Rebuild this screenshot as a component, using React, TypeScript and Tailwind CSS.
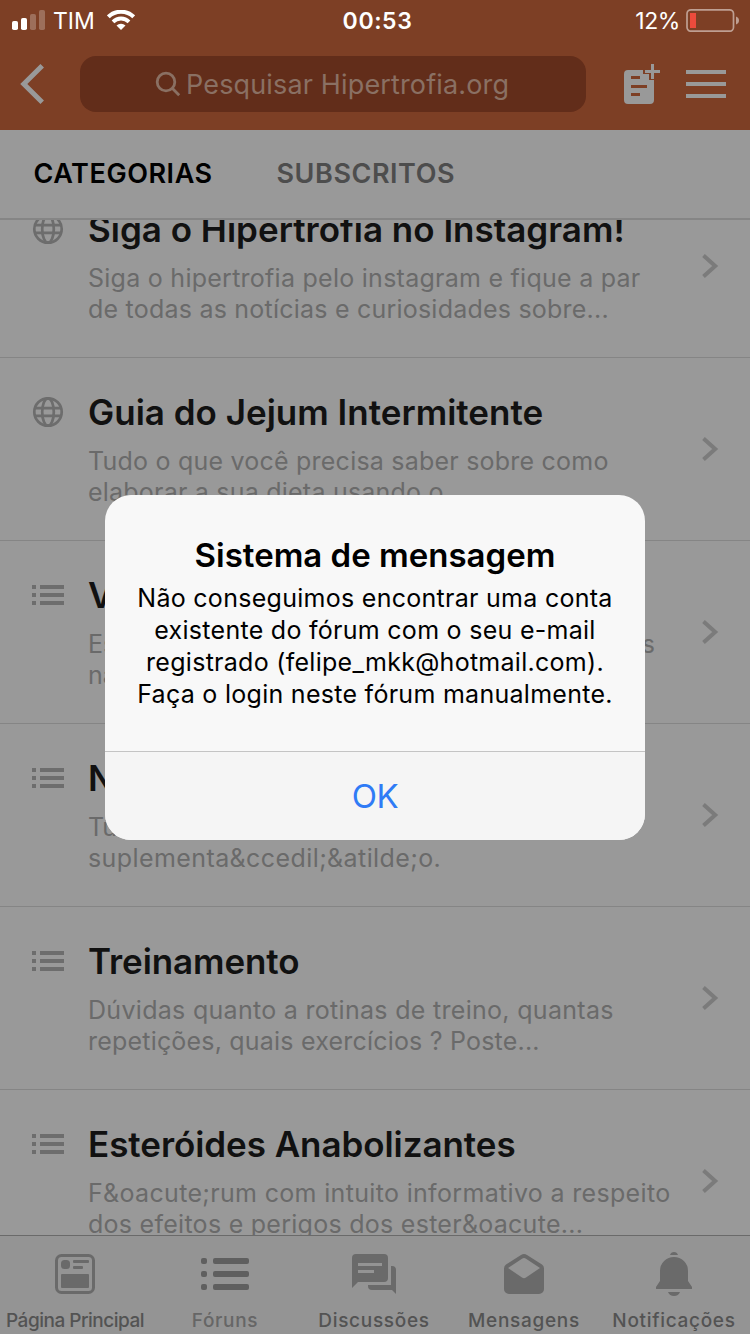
import React from 'react';

interface Forum {
  icon: 'globe' | 'list';
  title: string;
  titleClass: string;
  lines: { text: string; tail?: string; className: string }[];
}

const forums: Forum[] = [
  {
    icon: 'globe',
    title: 'Siga o Hipertrofia no Instagram!',
    titleClass: '',
    lines: [
      { text: 'Siga o hipertrofia pelo instagram e fique a par', className: 'tracking-[0.26px]' },
      { text: 'de todas as notícias e curiosidades sobre...', className: 'tracking-[0.22px]' },
    ],
  },
  {
    icon: 'globe',
    title: 'Guia do Jejum Intermitente',
    titleClass: '',
    lines: [
      { text: 'Tudo o que você precisa saber sobre como', className: 'tracking-[0.22px]' },
      { text: 'elaborar a sua dieta usando o...', className: 'tracking-[0.22px]' },
    ],
  },
  {
    icon: 'list',
    title: 'V',
    titleClass: '',
    lines: [
      { text: 'Es', tail: 's', className: '' },
      { text: 'na', className: '' },
    ],
  },
  {
    icon: 'list',
    title: 'N',
    titleClass: '',
    lines: [
      { text: 'Tu', className: '' },
      { text: 'suplementa&ccedil;&atilde;o.', className: 'tracking-[0.41px]' },
    ],
  },
  {
    icon: 'list',
    title: 'Treinamento',
    titleClass: 'tracking-[-0.1px]',
    lines: [
      { text: 'Dúvidas quanto a rotinas de treino, quantas', className: 'tracking-[0.3px]' },
      { text: 'repetições, quais exercícios ? Poste...', className: 'tracking-[0.2px]' },
    ],
  },
  {
    icon: 'list',
    title: 'Esteróides Anabolizantes',
    titleClass: 'tracking-[-0.06px]',
    lines: [
      { text: 'F&oacute;rum com intuito informativo a respeito', className: 'tracking-[0.33px]' },
      { text: 'dos efeitos e perigos dos ester&oacute...', className: 'tracking-[0.27px]' },
    ],
  },
];

const GlobeIcon = () => (
  <svg width="32" height="32" viewBox="0 0 32 32" fill="none" stroke="#6d6d6d" strokeWidth="2.7">
    <circle cx="16" cy="16" r="13.7" />
    <ellipse cx="16" cy="16" rx="5.800" ry="13.7" />
    <path d="M2.5 12.2h27M2.5 19.8h27" />
  </svg>
);

const ListIcon = () => (
  <svg width="32" height="20" viewBox="0 0 32 20" fill="#6d6d6d">
    <path d="M0 0h4v4H0zM8 0h24v4H8zM0 8h4v4H0zM8 8h24v4H8zM0 16h4v4H0zM8 16h24v4H8z" />
  </svg>
);

const StatusBar = () => (
  <div className="flex h-10 items-center text-[23px] text-white">
    <div className="flex w-[250px] items-center pl-3">
      <svg width="34" height="20" viewBox="0 0 34 20" fill="#fff">
        <rect x="0" y="11" width="6" height="9" rx="1.8" />
        <rect x="9" y="8" width="6" height="12" rx="1.8" />
        <rect x="18" y="4" width="6" height="16" rx="1.8" opacity="0.25" />
        <rect x="27" y="0" width="6" height="20" rx="1.8" opacity="0.25" />
      </svg>
      <span className="ml-[7px] w-[42px] pt-0.5">TIM</span>
      <svg className="ml-3" width="28" height="20" viewBox="0 0 28 20" fill="none" stroke="#fff">
        <path d="M1.3 6.9a18 18 0 0 1 25.4 0" strokeWidth="4" />
        <path d="M6 11.8a11.4 11.4 0 0 1 16 0" strokeWidth="3.8" />
        <path d="M14 20l-4.5-4.4a6.4 6.4 0 0 1 9 0z" fill="#fff" stroke="none" />
      </svg>
    </div>
    <div className="w-[255px] pt-0.5 text-center font-semibold tracking-[0.6px]">00:53</div>
    <div className="flex flex-1 items-center justify-end pr-2.5">
      <span className="mr-1.5 pt-0.5 tracking-[-0.4px]">12%</span>
      <svg width="54" height="24" viewBox="0 0 54 24" fill="none">
        <rect x="1" y="1.800" width="46.5" height="21.4" rx="4" stroke="#be9f92" strokeWidth="1.7" />
        <rect x="4" y="5" width="6" height="15" fill="#ec4b3c" />
        <path d="M50 8.6q3 1.2 3 4t-3 4z" fill="#be9f92" />
      </svg>
    </div>
  </div>
);

const Header = () => (
  <header className="h-[130px] shrink-0 bg-[#7d3f25]">
    <StatusBar />
    <div className="flex items-center pt-4">
      <svg className="ml-5 shrink-0" width="24" height="40" viewBox="0 0 24 40" fill="none" stroke="#999" strokeWidth="5">
        <path d="M22.2 1.8L3.8 20l18.4 18.2" />
      </svg>
      <div className="ml-9 flex h-14 w-[506px] shrink-0 items-center rounded-2xl bg-[#622d1a] pl-[75px] text-[27px] text-[#8a7063]">
        <svg width="26" height="26" viewBox="0 0 26 26" fill="none" stroke="#8a7063" strokeWidth="2.8">
          <circle cx="11" cy="11" r="8.8" />
          <path d="M17 17l7.2 7.2" />
        </svg>
        <span className="ml-[5px] pt-0.5 tracking-[0.15px] whitespace-nowrap">Pesquisar Hipertrofia.org</span>
      </div>
      <svg className="ml-[38px] shrink-0" width="36" height="40" viewBox="0 0 36 40">
        <path d="M4 6h15v4h6v6h5v20a4 4 0 0 1-4 4H4a4 4 0 0 1-4-4V10a4 4 0 0 1 4-4z" fill="#999" />
        <path d="M7 12h9v3H7zM7 21h16v3H7zM7 29h9v3H7z" fill="#7d3f25" />
        <path d="M28.500 0v15M21 7.500h15" stroke="#999" strokeWidth="3" />
      </svg>
      <svg className="ml-[26px] shrink-0" width="40" height="28" viewBox="0 0 40 28" fill="#999">
        <path d="M0 0h40v4H0zM0 12h40v4H0zM0 24h40v4H0z" />
      </svg>
    </div>
  </header>
);

const ForumRow: React.FC<{ forum: Forum }> = ({ forum }) => (
  <div className="flex h-[183px] border-b border-[#858585]">
    <div className="flex h-[108px] w-[88px] shrink-0 items-center pl-8">
      {forum.icon === 'globe' ? <GlobeIcon /> : <ListIcon />}
    </div>
    <div className="flex-1 whitespace-nowrap pt-[33px]">
      <h2 className={`text-[35px] leading-[42px] font-semibold text-[#111] ${forum.titleClass}`}>{forum.title}</h2>
      <div className="mt-[13px] text-[25px] leading-[31px] text-[#6a6a6a]">
        {forum.lines.map((line) => (
          <p key={line.text} className={line.className}>
            {line.tail ? (
              <span className="flex w-[567px] justify-between">
                <span>{line.text}</span>
                <span>{line.tail}</span>
              </span>
            ) : (
              line.text
            )}
          </p>
        ))}
      </div>
    </div>
    <div className="flex w-[49px] shrink-0 items-center">
      <svg width="18" height="24" viewBox="0 0 18 24" fill="none" stroke="#7b7b7b" strokeWidth="4">
        <path d="M2.500 1.500L14.200 12 2.500 22.500" />
      </svg>
    </div>
  </div>
);

const TabBar = () => (
  <nav className="grid h-[99px] shrink-0 grid-cols-[150px_150px_148px_152px_148px] border-t border-[#6a6a6a] bg-[#949494] text-[19px] font-medium tracking-[0.7px] text-[#535353]">
    <div className="flex flex-col items-center">
      <div className="flex h-[76px] items-center">
        <svg width="40" height="40" viewBox="0 0 40 40" fill="#6a6a6a">
          <rect x="1.500" y="1.500" width="37" height="37" rx="5" fill="none" stroke="#6a6a6a" strokeWidth="3" />
          <rect x="6" y="6" width="9" height="9" rx="3.500" />
          <rect x="18" y="6" width="16" height="3" rx="1" />
          <rect x="18" y="12" width="10" height="3" rx="1" />
          <rect x="6" y="20" width="28" height="14" rx="1" />
        </svg>
      </div>
      <span className="leading-[18px] tracking-[-0.5px] whitespace-nowrap">Página Principal</span>
    </div>
    <div className="flex flex-col items-center">
      <div className="flex h-[76px] items-center">
        <svg width="48" height="32" viewBox="0 0 48 32" fill="#5f5f5f">
          <rect width="6" height="6" rx="2" />
          <rect x="12" width="36" height="6" rx="2" />
          <rect y="13" width="6" height="6" rx="2" />
          <rect x="12" y="13" width="36" height="6" rx="2" />
          <rect y="26" width="6" height="6" rx="2" />
          <rect x="12" y="26" width="36" height="6" rx="2" />
        </svg>
      </div>
      <span className="leading-[18px] text-[#666]">Fóruns</span>
    </div>
    <div className="flex flex-col items-center">
      <div className="flex h-[76px] items-center">
        <svg width="44" height="40" viewBox="0 0 44 40" fill="#6a6a6a">
          <path d="M4 0h28a4 4 0 0 1 4 4v20a4 4 0 0 1-4 4H6l-6 6V4a4 4 0 0 1 4-4z" />
          <path d="M39 12h1a4 4 0 0 1 4 4v24l-4-4H20a4 4 0 0 1-4-4v-1h23z" />
          <path d="M6 9h24v3H6zM6 16h16v3H6z" fill="#949494" />
        </svg>
      </div>
      <span className="leading-[18px]">Discussões</span>
    </div>
    <div className="flex flex-col items-center">
      <div className="flex h-[76px] items-center">
        <svg width="40" height="40" viewBox="0 0 40 40">
          <path d="M2 10.500L17 1q3-2 6 0l15 9.500q2 1.500 2 4V35a5 5 0 0 1-5 5H5a5 5 0 0 1-5-5V14.500q0-2.500 2-4z" fill="#6a6a6a" />
          <path d="M4 14L18 4.800q2-1.400 4 0L36 14 22 23.500q-2 1.300-4 0z" fill="#949494" />
        </svg>
      </div>
      <span className="leading-[18px]">Mensagens</span>
    </div>
    <div className="flex flex-col items-center">
      <div className="flex h-[76px] items-center">
        <svg width="36" height="44" viewBox="0 0 36 44" fill="#6a6a6a">
          <path d="M14 3a4.200 4.200 0 0 1 8 0zM12 40h12q-1.500 4-6 4t-6-4z" />
          <path d="M4 19a14 14 0 0 1 28 0v10l4 6v2H0v-2l4-6z" />
        </svg>
      </div>
      <span className="leading-[18px]">Notificações</span>
    </div>
  </nav>
);

const Alert = () => (
  <div className="absolute top-[495px] left-[105px] flex h-[345px] w-[540px] flex-col rounded-[26px] bg-[#f8f8f8] text-center whitespace-nowrap text-black">
    <div className="h-64 pt-10">
      <h1 className="text-[33px] leading-10 font-semibold">Sistema de mensagem</h1>
      <div className="mt-[7px] text-[25px] leading-8 tracking-[0.28px]">
        <p>Não conseguimos encontrar uma conta</p>
        <p>existente do fórum com o seu e-mail</p>
        <p>registrado (felipe_mkk@hotmail.com).</p>
        <p>Faça o login neste fórum manualmente.</p>
      </div>
    </div>
    <button className="flex-1 rounded-b-[26px] border-t border-[#c4c4c4] bg-[#f5f5f5] pt-0.5 text-[33px] tracking-[-0.5px] text-[#2f7bf6]">OK</button>
  </div>
);

const App: React.FC = () => {
  return (
    <div className="relative flex h-[1334px] w-[750px] flex-col overflow-hidden bg-[#999] font-['Inter','Liberation_Sans',sans-serif]">
      <Header />
      <div className="flex h-[90px] shrink-0 items-center border-b-2 border-[#858585] pl-[33.5px] text-[27px] font-semibold tracking-[0.55px]">
        <span className="w-[243px] text-black">CATEGORIAS</span>
        <span className="text-[#4d4d4d]">SUBSCRITOS</span>
      </div>
      <main className="min-h-0 flex-1 overflow-hidden">
        <div className="-mt-[45px]">
          {forums.map((forum) => (
            <ForumRow key={forum.title} forum={forum} />
          ))}
        </div>
      </main>
      <TabBar />
      <Alert />
    </div>
  );
};

export default App;
